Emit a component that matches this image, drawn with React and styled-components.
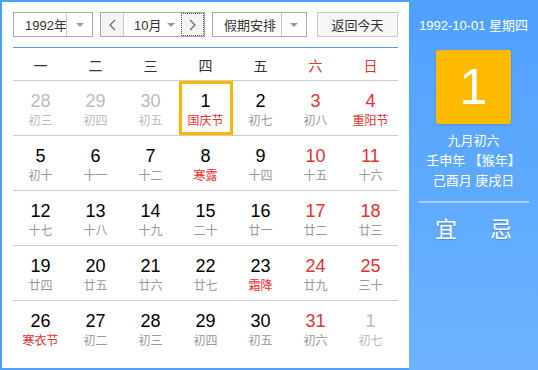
import React from "react";
import styled, { createGlobalStyle } from "styled-components";

const GlobalStyle = createGlobalStyle`
  body {
    margin: 0;
    font-family: "Liberation Sans", "Noto Sans CJK SC", sans-serif;
  }
`;

const RED = "#e8302f";

const Wrapper = styled.div`
  display: flex;
  width: 538px;
  height: 370px;
`;

const LeftPanel = styled.div`
  box-sizing: border-box;
  width: 409px;
  height: 370px;
  background: #fff;
  border: 2px solid #4fa0fd;
  border-right: none;
  padding: 10px 11px 0 11px;
`;

const Toolbar = styled.div`
  display: flex;
  align-items: stretch;
  height: 25px;
`;

const SelectBox = styled.div`
  box-sizing: border-box;
  display: flex;
  flex-shrink: 0;
  width: ${(p) => p.width}px;
  margin-right: ${(p) => p.gap || 0}px;
  border: 1px solid #a9a9a9;
  background: #fff;
  font-size: 13px;
  color: #333;
`;

const SelectText = styled.div`
  flex: 1;
  min-width: 0;
  display: flex;
  align-items: center;
  white-space: nowrap;
  padding-left: ${(p) => p.pad}px;
`;

const ArrowCell = styled.div`
  width: ${(p) => p.width}px;
  flex-shrink: 0;
  display: flex;
  align-items: center;
  justify-content: center;
  border-left: ${(p) => (p.divider ? "1px solid #c8c8c8" : "none")};
`;

const Caret = styled.span`
  width: 0;
  height: 0;
  border-left: 4px solid transparent;
  border-right: 4px solid transparent;
  border-top: 4px solid #999;
`;

const NavButton = styled.div`
  box-sizing: border-box;
  width: 23px;
  flex-shrink: 0;
  display: flex;
  align-items: center;
  justify-content: center;
  background: #f4f4f4;
  border: ${(p) => (p.focused ? "1px dotted #555" : "none")};
  border-right: ${(p) => (p.focused ? "1px dotted #555" : "1px solid #c8c8c8")};
`;

const ReturnButton = styled.div`
  box-sizing: border-box;
  margin-left: auto;
  width: 81px;
  display: flex;
  align-items: center;
  justify-content: center;
  white-space: nowrap;
  border: 1px solid #c9c9c9;
  background: #f7f7f7;
  font-size: 13px;
  color: #333;
`;

const BlueLine = styled.div`
  height: 1px;
  background: #4fa0fd;
  margin-top: 10px;
`;

const Grid = styled.div`
  display: grid;
  grid-template-columns: repeat(7, 55px);
`;

const HeadCell = styled.div`
  height: 33px;
  padding-top: 2px;
  box-sizing: border-box;
  display: flex;
  align-items: center;
  justify-content: center;
  font-size: 14px;
  color: ${(p) => (p.weekend ? RED : "#333")};
  border-bottom: 1px solid #cfcfcf;
`;

const Cell = styled.div`
  height: 55px;
  box-sizing: border-box;
  border-bottom: ${(p) => (p.last ? "none" : "1px solid #cfcfcf")};
  display: flex;
  justify-content: center;
`;

const DayBox = styled.div`
  box-sizing: border-box;
  width: 54px;
  height: 54px;
  border: 3px solid ${(p) => (p.selected ? "#ffb600" : "transparent")};
  display: flex;
  flex-direction: column;
  align-items: center;
  padding-top: 7px;
`;

const DayNum = styled.div`
  font-size: 18px;
  line-height: 21px;
  color: ${(p) => (p.other ? "#bbb" : p.red ? RED : "#000")};
`;

const Lunar = styled.div`
  margin-top: 1px;
  font-size: 12px;
  line-height: 16px;
  white-space: nowrap;
  color: ${(p) => (p.other ? "#bbb" : p.red ? RED : "#999")};
`;

const RightPanel = styled.div`
  flex: 1;
  height: 370px;
  background: linear-gradient(#4fa0fd, #6db3ff);
  color: #fff;
  display: flex;
  flex-direction: column;
  align-items: center;
  padding-top: 17px;
  box-sizing: border-box;
`;

const DateLine = styled.div`
  font-size: 13px;
  line-height: 18px;
`;

const BigDay = styled.div`
  margin-top: 15px;
  width: 75px;
  height: 74px;
  border-radius: 3px;
  background: #ffbb00;
  display: flex;
  align-items: center;
  justify-content: center;
  font-size: 50px;
  box-shadow: 0 1px 3px rgba(0, 0, 0, 0.12);
`;

const InfoLines = styled.div`
  margin-top: 7px;
  font-size: 13px;
  line-height: 20px;
  text-align: center;
`;

const Separator = styled.div`
  align-self: stretch;
  margin: 10px 9px 0 10px;
  height: 2px;
  background: rgba(255, 255, 255, 0.45);
`;

const YiJi = styled.div`
  margin-top: 14px;
  display: flex;
  gap: 33px;
  font-size: 22px;
  line-height: 26px;
  text-shadow: 0 1px 1px rgba(0, 0, 0, 0.2);
`;

const Chevron = ({ dir }) => (
  <svg width="7" height="12" viewBox="0 0 7 12">
    <polyline
      points={dir === "left" ? "6,1 1,6 6,11" : "1,1 6,6 1,11"}
      fill="none"
      stroke="#666"
      strokeWidth="1.2"
    />
  </svg>
);

const weekdays = ["一", "二", "三", "四", "五", "六", "日"];

const days = [
  [28, "初三", { other: true }],
  [29, "初四", { other: true }],
  [30, "初五", { other: true }],
  [1, "国庆节", { fest: true, selected: true }],
  [2, "初七"],
  [3, "初八"],
  [4, "重阳节", { fest: true }],
  [5, "初十"],
  [6, "十一"],
  [7, "十二"],
  [8, "寒露", { fest: true }],
  [9, "十四"],
  [10, "十五"],
  [11, "十六"],
  [12, "十七"],
  [13, "十八"],
  [14, "十九"],
  [15, "二十"],
  [16, "廿一"],
  [17, "廿二"],
  [18, "廿三"],
  [19, "廿四"],
  [20, "廿五"],
  [21, "廿六"],
  [22, "廿七"],
  [23, "霜降", { fest: true }],
  [24, "廿九"],
  [25, "三十"],
  [26, "寒衣节", { fest: true }],
  [27, "初二"],
  [28, "初三"],
  [29, "初四"],
  [30, "初五"],
  [31, "初六"],
  [1, "初七", { other: true }],
];

export default function App() {
  return (
    <>
      <GlobalStyle />
      <Wrapper>
        <LeftPanel>
          <Toolbar>
            <SelectBox width={80} gap={7}>
              <SelectText pad={11}>1992年</SelectText>
              <ArrowCell width={25} divider>
                <Caret />
              </ArrowCell>
            </SelectBox>
            <SelectBox width={105} gap={7}>
              <NavButton>
                <Chevron dir="left" />
              </NavButton>
              <SelectText pad={10}>10月</SelectText>
              <ArrowCell width={20}>
                <Caret />
              </ArrowCell>
              <NavButton focused>
                <Chevron dir="right" />
              </NavButton>
            </SelectBox>
            <SelectBox width={95}>
              <SelectText pad={11}>假期安排</SelectText>
              <ArrowCell width={24} divider>
                <Caret />
              </ArrowCell>
            </SelectBox>
            <ReturnButton>返回今天</ReturnButton>
          </Toolbar>
          <BlueLine />
          <Grid>
            {weekdays.map((w, i) => (
              <HeadCell key={w} weekend={i >= 5}>
                {w}
              </HeadCell>
            ))}
            {days.map(([d, l, o = {}], i) => {
              const weekend = i % 7 >= 5;
              return (
                <Cell key={i} last={i >= 28}>
                  <DayBox selected={o.selected}>
                    <DayNum other={o.other} red={weekend}>
                      {d}
                    </DayNum>
                    <Lunar other={o.other} red={o.fest}>
                      {l}
                    </Lunar>
                  </DayBox>
                </Cell>
              );
            })}
          </Grid>
        </LeftPanel>
        <RightPanel>
          <DateLine>1992-10-01 星期四</DateLine>
          <BigDay>1</BigDay>
          <InfoLines>
            <div>九月初六</div>
            <div>壬申年 【猴年】</div>
            <div>己酉月 庚戌日</div>
          </InfoLines>
          <Separator />
          <YiJi>
            <span>宜</span>
            <span>忌</span>
          </YiJi>
        </RightPanel>
      </Wrapper>
    </>
  );
}
